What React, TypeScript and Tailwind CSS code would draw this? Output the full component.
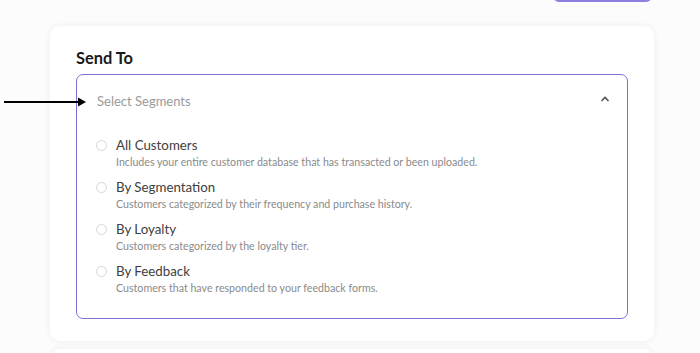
import React from "react";

const options = [
  { title: "All Customers", desc: "Includes your entire customer database that has transacted or been uploaded." },
  { title: "By Segmentation", desc: "Customers categorized by their frequency and purchase history." },
  { title: "By Loyalty", desc: "Customers categorized by the loyalty tier." },
  { title: "By Feedback", desc: "Customers that have responded to your feedback forms." },
];

export default function App() {
  return (
    <div
      className="relative w-[700px] h-[353px] overflow-hidden bg-[#fcfcfc]"
      style={{ fontFamily: "Lato, 'Open Sans', sans-serif" }}
    >
      <div className="flex justify-end pr-[48px]">
        <div className="w-[99px] h-[30px] mt-[-28px] rounded-md border-2 border-[#8b7fe0] bg-white" />
      </div>
      <div className="ml-[50px] mt-[24px] w-[604px] rounded-[10px] bg-white shadow-[0_0_8px_rgba(0,0,0,0.06)] px-[26px] pt-[22px] pb-[22px]">
        <div className="text-[16.4px] leading-[20px] font-bold text-[#1a1a1a] mb-[6px]">Send To</div>
        <div className="rounded-[7px] border border-[#7d71d2]">
          <div className="h-[54px] flex items-center justify-between pl-[20px] pr-[16px]">
            <span className="text-[13px] text-[#9a9a9a]">Select Segments</span>
            <svg width="12" height="12" viewBox="0 0 12 12" className="mt-[-6px]">
              <path d="M2.5 8 L6 4.5 L9.5 8" fill="none" stroke="#555" strokeWidth="1.6" />
            </svg>
          </div>
          <div className="flex flex-col gap-[10px] pt-[8px] pb-[23px] pl-[19px]">
            {options.map((o) => (
              <div key={o.title} className="flex">
                <div className="w-[20px] h-[17px] flex items-center">
                  <div className="w-[11px] h-[11px] rounded-full border border-[#d6d6d6] bg-white" />
                </div>
                <div>
                  <div className="text-[13.3px] leading-[17px] text-[#404040]">{o.title}</div>
                  <div className="text-[10.65px] leading-[15px] text-[#8a8a8a]">{o.desc}</div>
                </div>
              </div>
            ))}
          </div>
        </div>
      </div>
      <div className="ml-[50px] mt-[8px] w-[604px] h-[40px] rounded-[10px] bg-white shadow-[0_0_8px_rgba(0,0,0,0.06)]" />
      <svg className="absolute left-0 top-[96px]" width="90" height="12" viewBox="0 0 90 12">
        <line x1="4" y1="6" x2="80" y2="6" stroke="#000" strokeWidth="2" />
        <polygon points="78,1.5 86,6 78,10.5" fill="#000" />
      </svg>
    </div>
  );
}
